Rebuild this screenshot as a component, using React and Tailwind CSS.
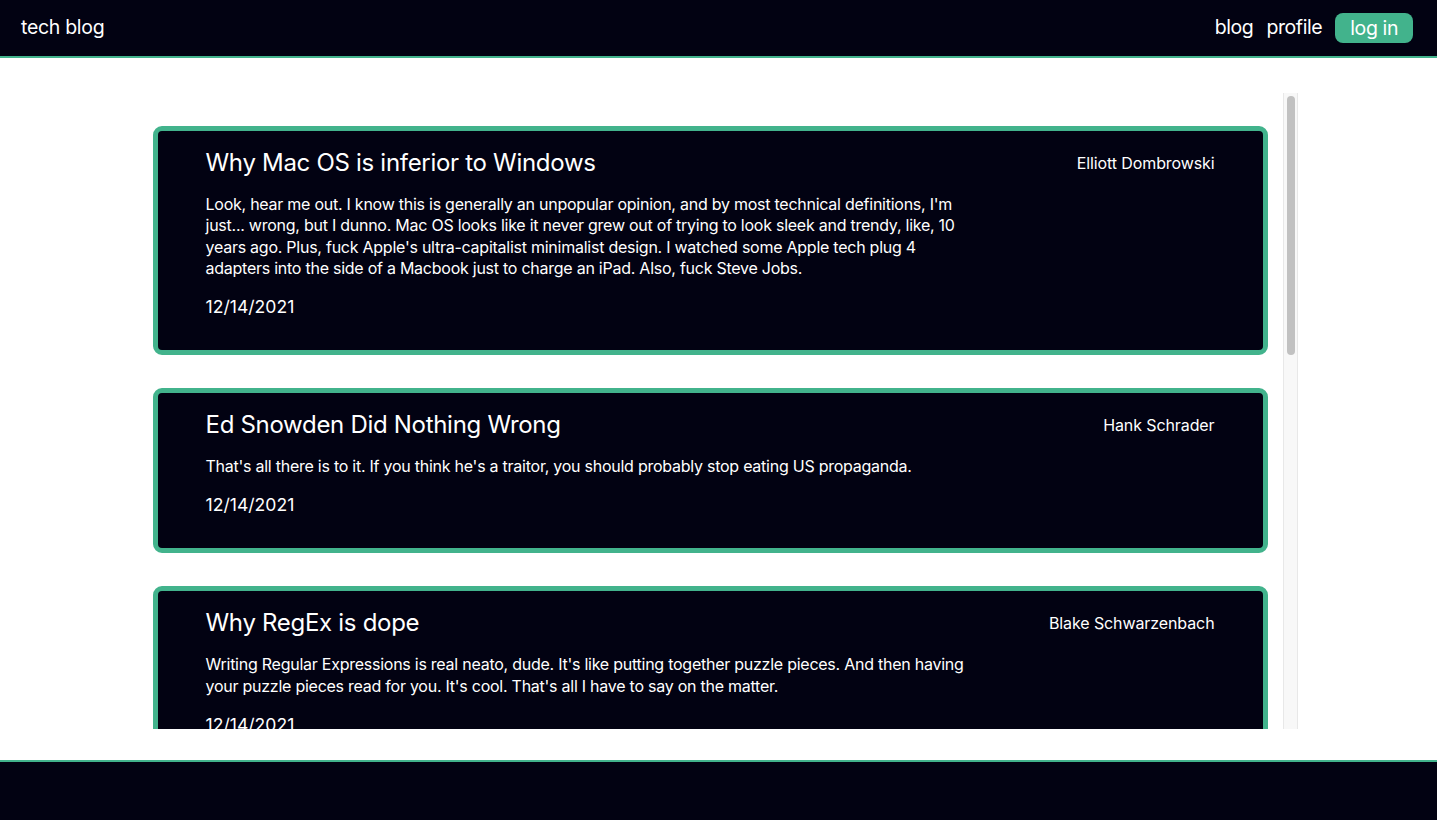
import React from 'react'

const POSTS = [
  {
    title: 'Why Mac OS is inferior to Windows',
    author: 'Elliott Dombrowski',
    body: "Look, hear me out. I know this is generally an unpopular opinion, and by most technical definitions, I'm just... wrong, but I dunno. Mac OS looks like it never grew out of trying to look sleek and trendy, like, 10 years ago. Plus, fuck Apple's ultra-capitalist minimalist design. I watched some Apple tech plug 4 adapters into the side of a Macbook just to charge an iPad. Also, fuck Steve Jobs.",
    date: '12/14/2021'
  },
  {
    title: 'Ed Snowden Did Nothing Wrong',
    author: 'Hank Schrader',
    body: "That's all there is to it. If you think he's a traitor, you should probably stop eating US propaganda.",
    date: '12/14/2021'
  },
  {
    title: 'Why RegEx is dope',
    author: 'Blake Schwarzenbach',
    body: "Writing Regular Expressions is real neato, dude. It's like putting together puzzle pieces. And then having your puzzle pieces read for you. It's cool. That's all I have to say on the matter.",
    date: '12/14/2021'
  },
  {
    title: 'Tabs vs. Spaces',
    author: 'Elliott Dombrowski',
    body: 'Tabs. Next question.',
    date: '12/14/2021'
  }
]

const FONT = { fontFamily: 'Inter, "Noto Sans", sans-serif' }

function Post({ post }) {
  return (
    <div className="mx-[15px] mb-[33px] rounded-[9px] border-[5px] border-[#42b38c] bg-[#020212] pl-[48px] pr-[48px] pt-[16px] pb-[30px] text-white">
      <div className="flex justify-between">
        <div className="w-[765px]">
          <h2 className="text-[24px] leading-[32px] tracking-[-0.3px]">{post.title}</h2>
          <p className="mt-[15px] text-[16px] leading-[21.3px] tracking-[-0.25px]">{post.body}</p>
          <p className="mt-[14px] text-[17.6px] leading-[27px]">{post.date}</p>
        </div>
        <div className="pt-[4px] text-[16px] leading-[24px] tracking-[-0.1px]">{post.author}</div>
      </div>
    </div>
  )
}

export default function App() {
  return (
    <div className="flex h-screen flex-col bg-white" style={FONT}>
      <header className="flex h-[58px] shrink-0 items-center justify-between border-b-2 border-[#42b38c] bg-[#020212] pl-[21px] pr-[24px] text-white">
        <a className="text-[19.5px] tracking-[-0.3px]">tech blog</a>
        <nav className="flex items-center gap-[13px] text-[19.5px] tracking-[-0.4px]">
          <a>blog</a>
          <a>profile</a>
          <button className="h-[30px] rounded-[8px] bg-[#42b38c] px-[15px] leading-[30px]">log in</button>
        </nav>
      </header>
      <main className="flex-1 min-h-0 pt-[35px] pb-[31px]">
        <div className="mx-auto flex h-full w-[1160px] translate-x-[-1px]">
          <div className="min-w-0 flex-1 overflow-hidden pt-[33px]">
            {POSTS.map((p, i) => (
              <Post key={i} post={p} />
            ))}
          </div>
          <div className="w-[15px] shrink-0 border-x border-[#e8e8e8] bg-[#f8f8f8] pl-[3px] pt-[3px]">
            <div className="h-[259px] w-[8px] rounded-full bg-[#c1c1c1]" />
          </div>
        </div>
      </main>
      <footer className="h-[60px] shrink-0 border-t-2 border-[#42b38c] bg-[#020212]" />
    </div>
  )
}
